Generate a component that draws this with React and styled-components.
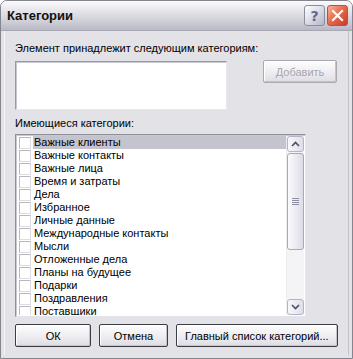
import styled, { createGlobalStyle } from "styled-components";

const categories = [
  "Важные клиенты",
  "Важные контакты",
  "Важные лица",
  "Время и затраты",
  "Дела",
  "Избранное",
  "Личные данные",
  "Международные контакты",
  "Мысли",
  "Отложенные дела",
  "Планы на будущее",
  "Подарки",
  "Поздравления",
  "Поставщики",
];

function App() {
  return (
    <>
      <Global />
      <Window>
        <TitleBar>
          <Title>Категории</Title>
          <Caps>
            <CapButton>?</CapButton>
            <CapButton close>
              <svg width="13" height="13" viewBox="0 0 13 13">
                <path d="M2 2 L11 11 M11 2 L2 11" stroke="#fff" strokeWidth="2.2" strokeLinecap="square" />
              </svg>
            </CapButton>
          </Caps>
        </TitleBar>
        <Body>
          <Label>Элемент принадлежит следующим категориям:</Label>
          <TopRow>
            <TextArea />
            <Button disabled w={74}>Добавить</Button>
          </TopRow>
          <Label gap={7}>Имеющиеся категории:</Label>
          <ListBox>
            <Items>
              {categories.map((c, i) => (
                <Item key={c}>
                  <Check />
                  <ItemText selected={i === 0}>{c}</ItemText>
                </Item>
              ))}
            </Items>
            <ScrollBar>
              <Arrow>
                <svg width="9" height="6" viewBox="0 0 9 6">
                  <path d="M1 5 L4.5 1.5 L8 5" fill="none" stroke="#4d4d68" strokeWidth="1.6" />
                </svg>
              </Arrow>
              <Thumb>
                <Grip />
              </Thumb>
              <Track />
              <Arrow>
                <svg width="9" height="6" viewBox="0 0 9 6">
                  <path d="M1 1 L4.5 4.5 L8 1" fill="none" stroke="#4d4d68" strokeWidth="1.6" />
                </svg>
              </Arrow>
            </ScrollBar>
          </ListBox>
          <Buttons>
            <Button w={78}>ОК</Button>
            <Button w={70}>Отмена</Button>
            <Button w={166}>Главный список категорий...</Button>
          </Buttons>
        </Body>
      </Window>
    </>
  );
}

export default App;

const Global = createGlobalStyle`
  body {
    margin: 0;
    background: #fff;
    font-family: "Liberation Sans", Tahoma, sans-serif;
  }
`;

const Window = styled.div`
  width: 353px;
  height: 359px;
  box-sizing: border-box;
  background: #e3e2e7;
  border: 1px solid #85858f;
  border-radius: 7px 7px 0 0;
  display: flex;
  flex-direction: column;
  overflow: hidden;
`;

const TitleBar = styled.div`
  height: 29px;
  flex-shrink: 0;
  display: flex;
  align-items: center;
  justify-content: space-between;
  padding: 0 4px 0 6px;
  background: linear-gradient(#fbfbfd 0%, #e4e4ea 35%, #cfcfd8 70%, #b9b9c6 100%);
  border-bottom: 1px solid #a8a8b4;
`;

const Title = styled.span`
  font-family: "Liberation Sans", sans-serif;
  font-weight: bold;
  font-size: 13px;
  color: #111;
`;

const Caps = styled.div`
  display: flex;
  gap: 2px;
`;

const CapButton = styled.div`
  width: 21px;
  height: 21px;
  box-sizing: border-box;
  border-radius: 3px;
  border: 1px solid ${(p) => (p.close ? "#a8594a" : "#8d8da0")};
  background: ${(p) =>
    p.close
      ? "linear-gradient(135deg, #f7b4a0 0%, #e76d4c 45%, #c9392a 100%)"
      : "linear-gradient(135deg, #ffffff 0%, #dcdce6 50%, #b4b4c6 100%)"};
  display: flex;
  align-items: center;
  justify-content: center;
  font-family: "DejaVu Sans", sans-serif;
  font-weight: bold;
  font-size: 14px;
  color: #5a6a90;
`;

const Body = styled.div`
  flex: 1;
  display: flex;
  flex-direction: column;
  margin: 0 3px 3px 3px;
  padding: 11px 10px 0 10px;
  border-left: 1px solid #f4f4f7;
  border-right: 1px solid #c4c4cc;
`;

const Label = styled.div`
  font-size: 11px;
  line-height: 13px;
  color: #000;
  margin-top: ${(p) => p.gap || 0}px;
`;

const TopRow = styled.div`
  display: flex;
  justify-content: space-between;
  align-items: flex-start;
  margin-top: 6px;
  padding-right: 1px;
`;

const TextArea = styled.div`
  width: 212px;
  height: 49px;
  box-sizing: border-box;
  background: #fff;
  border: 1px solid #9a9aa4;
  border-right-color: #e8e8ec;
  border-bottom-color: #e8e8ec;
  box-shadow: inset 1px 1px 0 #c8c8d0;
`;

const Button = styled.div`
  width: ${(p) => p.w}px;
  height: 23px;
  box-sizing: border-box;
  display: flex;
  align-items: center;
  justify-content: center;
  font-size: 11px;
  color: ${(p) => (p.disabled ? "#a5a5ae" : "#000")};
  background: linear-gradient(#fdfdfd, #ececf0 60%, #dcdce2);
  border: 1px solid ${(p) => (p.disabled ? "#a9a9b3" : "#3c3c44")};
  border-radius: 2px;
  box-shadow: inset -1px -1px 0 #c4c4cc, inset 1px 1px 0 #fff;
  margin-top: ${(p) => (p.disabled ? "-1px" : "0")};
`;

const ListBox = styled.div`
  margin-top: 4px;
  width: 291px;
  height: 183px;
  box-sizing: border-box;
  display: flex;
  background: #fff;
  border: 1px solid #8e8e98;
  border-right-color: #e4e4ea;
  border-bottom-color: #e4e4ea;
  box-shadow: inset 1px 1px 0 #c8c8d0;
  padding: 1px 1px 1px 2px;
  overflow: hidden;
`;

const Items = styled.div`
  flex: 1;
  overflow: hidden;
`;

const Item = styled.div`
  display: flex;
  align-items: center;
  height: 13px;
`;

const Check = styled.div`
  width: 12px;
  height: 12px;
  box-sizing: border-box;
  margin-left: 1px;
  border: 1px solid #b8b8c2;
  border-right-color: #dcdce2;
  border-bottom-color: #dcdce2;
  background: #fff;
  flex-shrink: 0;
`;

const ItemText = styled.div`
  flex: 1;
  margin-left: 2px;
  height: 13px;
  padding-left: 1px;
  font-size: 11px;
  line-height: 13px;
  color: #000;
  white-space: nowrap;
  background: ${(p) => (p.selected ? "#c4c4cf" : "transparent")};
`;

const ScrollBar = styled.div`
  width: 17px;
  display: flex;
  flex-direction: column;
  background: #f4f4f6;
  border-left: 1px solid #ededf0;
`;

const Arrow = styled.div`
  height: 16px;
  box-sizing: border-box;
  display: flex;
  align-items: center;
  justify-content: center;
  border: 1px solid #b4b4c4;
  border-radius: 3px;
  background: linear-gradient(90deg, #f8f8fb, #dedee8);
`;

const Thumb = styled.div`
  height: 97px;
  box-sizing: border-box;
  display: flex;
  align-items: center;
  justify-content: center;
  border: 1px solid #a8a8bc;
  border-radius: 3px;
  background: linear-gradient(90deg, #fbfbfd, #dcdce6);
  margin-top: 1px;
`;

const Grip = styled.div`
  width: 7px;
  height: 7px;
  background: repeating-linear-gradient(#8e8ea4 0 1px, transparent 1px 2px);
`;

const Track = styled.div`
  flex: 1;
`;

const Buttons = styled.div`
  display: flex;
  gap: 8px;
  margin-top: 7px;
`;
